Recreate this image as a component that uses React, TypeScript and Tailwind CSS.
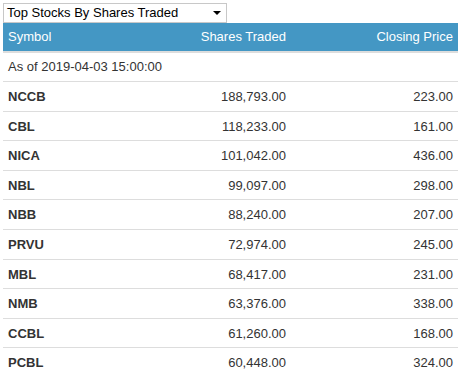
import React from 'react'

const rows = [
  { symbol: 'NCCB', shares: '188,793.00', price: '223.00' },
  { symbol: 'CBL', shares: '118,233.00', price: '161.00' },
  { symbol: 'NICA', shares: '101,042.00', price: '436.00' },
  { symbol: 'NBL', shares: '99,097.00', price: '298.00' },
  { symbol: 'NBB', shares: '88,240.00', price: '207.00' },
  { symbol: 'PRVU', shares: '72,974.00', price: '245.00' },
  { symbol: 'MBL', shares: '68,417.00', price: '231.00' },
  { symbol: 'NMB', shares: '63,376.00', price: '338.00' },
  { symbol: 'CCBL', shares: '61,260.00', price: '168.00' },
  { symbol: 'PCBL', shares: '60,448.00', price: '324.00' },
]

export default function App() {
  return (
    <div className="bg-white pt-[3px] pl-[3px] text-[13px] leading-[18.57px] text-[#333]" style={{ fontFamily: '"Liberation Sans", Arial, sans-serif' }}>
      {/* fake select box */}
      <div className="flex h-[20px] w-[224px] items-center justify-between border border-[#c8c8c8] bg-white pl-[3px] pr-[4px] text-black">
        <span>Top Stocks By Shares Traded</span>
        <span className="mr-[1px] h-0 w-0 border-x-[4px] border-t-[4px] border-x-transparent border-t-black" />
      </div>

      <table className="w-[455px] border-collapse">
        <thead>
          <tr className="bg-[#4497c4] text-white">
            <th className="w-[130px] border-b-2 border-[#dddddd] px-[5px] pt-[5px] pb-[4px] text-left font-normal">Symbol</th>
            <th className="w-[158px] border-b-2 border-[#dddddd] px-[5px] pt-[5px] pb-[4px] text-right font-normal">Shares Traded</th>
            <th className="border-b-2 border-[#dddddd] px-[5px] pt-[5px] pb-[4px] text-right font-normal">Closing Price</th>
          </tr>
        </thead>
        <tbody>
          <tr>
            <td colSpan={3} className="px-[5px] py-[5px]">As of 2019-04-03 15:00:00</td>
          </tr>
          {rows.map((r) => (
            <tr key={r.symbol} className="border-t border-[#dddddd]">
              <td className="px-[5px] pt-[6px] pb-[4px] font-bold">{r.symbol}</td>
              <td className="px-[5px] pt-[6px] pb-[4px] text-right">{r.shares}</td>
              <td className="px-[5px] pt-[6px] pb-[4px] text-right">{r.price}</td>
            </tr>
          ))}
        </tbody>
      </table>
    </div>
  )
}
